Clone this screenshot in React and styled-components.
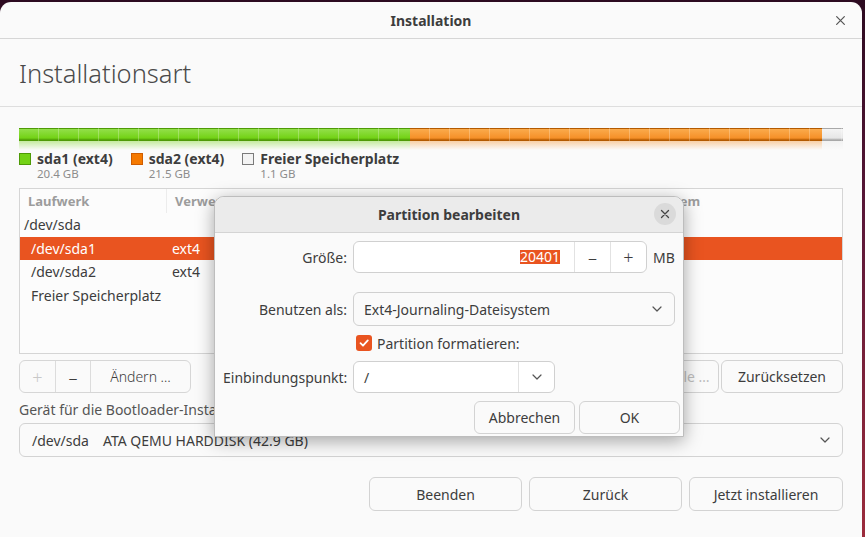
import React from "react";
import styled, { createGlobalStyle } from "styled-components";

const GlobalStyle = createGlobalStyle`
  html, body {
    margin: 0;
    padding: 0;
    width: 865px;
    height: 537px;
    overflow: hidden;
    background: linear-gradient(180deg, #2c0a20 0%, #5a1738 40%, #9c2c3c 100%);
    font-family: "Noto Sans", "Open Sans", "DejaVu Sans", sans-serif;
    color: #3d3d3d;
  }
`;

const Chevron = ({ size = 10 }) => (
  <svg width={size} height={size * 0.6} viewBox="0 0 10 6" fill="none">
    <path d="M1 1 L5 5 L9 1" stroke="#555" strokeWidth="1.2" strokeLinecap="round" strokeLinejoin="round" />
  </svg>
);

const Cross = ({ size = 10, color = "#444", width = 1.3 }) => (
  <svg width={size} height={size} viewBox="0 0 10 10">
    <path d="M1.5 1.5 L8.5 8.5 M8.5 1.5 L1.5 8.5" stroke={color} strokeWidth={width} strokeLinecap="round" />
  </svg>
);

const Desktop = styled.div`
  padding-top: 2px;
  height: 535px;
`;

const Window = styled.div`
  position: relative;
  width: 862px;
  height: 545px;
  background: #fafafa;
  border-radius: 11px 11px 0 0;
`;

const TitleBar = styled.div`
  height: 36px;
  display: flex;
  align-items: center;
  justify-content: center;
  border-bottom: 1px solid #d6d6d6;
  font-size: 14px;
  font-weight: 700;
  color: #3d3d3d;
  position: relative;
  .close {
    position: absolute;
    right: 11px;
    top: 7px;
    width: 22px;
    height: 22px;
    display: flex;
    align-items: center;
    justify-content: center;
  }
`;

const PageHeader = styled.div`
  height: 67px;
  display: flex;
  align-items: center;
  padding-left: 19px;
  border-bottom: 1px solid #dedede;
  font-size: 25.5px;
  font-weight: 300;
  color: #4a4a4a;
`;

const Content = styled.div`
  padding: 21px 19px 0 19px;
`;

const Bar = styled.div`
  display: flex;
  height: 22px;
`;

const segColors = {
  green: { top: "#93e04a", mid: "#73d216", edge: "#4e9a06" },
  orange: { top: "#fbab4c", mid: "#f59028", edge: "#b35a00" },
  free: { top: "#f4f4f4", mid: "#e6e6e6", edge: "#a8a8a8" },
};

const Segment = styled.div`
  flex: 0 0 ${(p) => p.$w}px;
  background:
    repeating-linear-gradient(90deg, transparent 0 19px, rgba(255, 255, 255, 0.25) 19px 20px) 0 0 / 100% 13px no-repeat,
    linear-gradient(180deg,
      ${(p) => segColors[p.$c].edge} 0 1px,
      ${(p) => segColors[p.$c].top} 1px,
      ${(p) => segColors[p.$c].mid} 10px,
      ${(p) => segColors[p.$c].edge} 12px 13px) 0 0 / 100% 13px no-repeat,
    linear-gradient(180deg,
      ${(p) => segColors[p.$c].mid}66 0,
      rgba(250, 250, 250, 0) 9px) 0 13px / 100% 9px no-repeat;
`;

const Legend = styled.div`
  display: flex;
  gap: 18px;
  margin-top: 1px;
`;

const LegendItem = styled.div`
  display: grid;
  grid-template-columns: 12px auto;
  column-gap: 6px;
  align-items: center;
  .name {
    font-size: 14px;
    font-weight: 700;
    color: #3d3d3d;
    line-height: 16px;
  }
  .size {
    grid-column: 2;
    font-size: 11.5px;
    color: #8c8c8c;
    line-height: 14px;
  }
`;

const Swatch = styled.span`
  width: 10px;
  height: 10px;
  border: 1px solid ${(p) => p.$border};
  background: ${(p) => p.$bg};
`;

const Table = styled.div`
  margin-top: 7px;
  height: 164px;
  border: 1px solid #d5d5d5;
  background: #fcfcfc;
`;

const cols = "147px 105px 118px 105px 75px 75px 1fr";

const HeadRow = styled.div`
  display: grid;
  grid-template-columns: ${cols};
  height: 24px;
  align-items: stretch;
`;

const HeadCell = styled.div`
  display: flex;
  align-items: center;
  padding-left: 8px;
  border-right: 1px solid ${(p) => (p.$sep ? "#ececec" : "transparent")};
  font-size: 13px;
  font-weight: 700;
  color: #9c9c9c;
  white-space: nowrap;
  overflow: hidden;
`;

const Row = styled.div`
  display: grid;
  grid-template-columns: ${cols};
  height: 23.5px;
  align-items: center;
  font-size: 14px;
  background: ${(p) => (p.$selected ? "#e95420" : "transparent")};
  color: ${(p) => (p.$selected ? "#ffffff" : "#3d3d3d")};
  .dev {
    padding-left: ${(p) => (p.$child ? 11 : 4)}px;
    white-space: nowrap;
  }
  .use {
    padding-left: 5px;
  }
`;

const ButtonRow = styled.div`
  display: flex;
  justify-content: space-between;
  margin-top: 6px;
  height: 33px;
`;

const Group = styled.div`
  display: flex;
  border: 1px solid #d6d6d6;
  border-radius: 6px;
  background: #fafafa;
  overflow: hidden;
`;

const GroupButton = styled.div`
  width: ${(p) => p.$w}px;
  display: flex;
  align-items: center;
  justify-content: center;
  font-size: ${(p) => (p.$icon ? 18 : 14)}px;
  font-weight: 300;
  color: ${(p) => (p.$disabled ? "#c8c8c8" : "#3d3d3d")};
  & + & {
    border-left: 1px solid #dcdcdc;
  }
`;

const Button = styled.div`
  width: ${(p) => p.$w}px;
  height: ${(p) => p.$h || 33}px;
  box-sizing: border-box;
  display: flex;
  align-items: center;
  justify-content: center;
  border: 1px solid #d3d3d3;
  border-radius: 6px;
  background: #fafafa;
  font-size: 14px;
  color: ${(p) => (p.$disabled ? "#bdbdbd" : "#3d3d3d")};
  white-space: nowrap;
`;

const RightButtons = styled.div`
  display: flex;
  gap: 2px;
`;

const FieldLabel = styled.div`
  margin-top: 8px;
  font-size: 14px;
  color: #555;
  line-height: 18px;
`;

const Combo = styled.div`
  margin-top: 4px;
  height: 34px;
  box-sizing: border-box;
  border: 1px solid #d3d3d3;
  border-radius: 6px;
  background: #fafafa;
  display: flex;
  align-items: center;
  padding: 0 12px;
  font-size: 14px;
  color: #3d3d3d;
  .disk {
    margin-left: 14px;
    flex: 1;
  }
`;

const Footer = styled.div`
  display: flex;
  justify-content: flex-end;
  gap: 7px;
  margin-top: 20px;
`;

/* dialog */

const Dialog = styled.div`
  position: absolute;
  left: 214px;
  top: 194px;
  width: 470px;
  height: 241px;
  box-sizing: border-box;
  background: #fafafa;
  border: 1px solid #bdbdbd;
  border-radius: 10px 10px 0 0;
  box-shadow: 0 4px 18px rgba(0, 0, 0, 0.35);
  overflow: hidden;
`;

const DialogHeader = styled.div`
  height: 35px;
  background: #ebebeb;
  border-bottom: 1px solid #d4d4d4;
  display: flex;
  align-items: center;
  justify-content: center;
  position: relative;
  font-size: 14px;
  font-weight: 700;
  color: #3d3d3d;
`;

const CloseCircle = styled.div`
  position: absolute;
  right: 7px;
  top: 6px;
  width: 22px;
  height: 22px;
  border-radius: 50%;
  background: #dadada;
  display: flex;
  align-items: center;
  justify-content: center;
`;

const DialogBody = styled.div`
  padding: 8px 8px 0 8px;
`;

const FormRow = styled.div`
  display: grid;
  grid-template-columns: 124px auto;
  column-gap: 6px;
  align-items: center;
  height: ${(p) => p.$h}px;
  margin-top: ${(p) => p.$top || 0}px;
`;

const Label = styled.div`
  text-align: right;
  font-size: 14px;
  color: #3d3d3d;
  white-space: nowrap;
`;

const Field = styled.div`
  display: flex;
  align-items: center;
  gap: 6px;
`;

const Entry = styled.div`
  width: ${(p) => p.$w}px;
  height: ${(p) => p.$h || 32}px;
  box-sizing: border-box;
  border: 1px solid #d0d0d0;
  border-radius: 6px;
  background: ${(p) => p.$bg || "#ffffff"};
  display: flex;
  align-items: stretch;
  font-size: 14px;
  color: #3d3d3d;
  overflow: hidden;
`;

const EntryText = styled.div`
  flex: 1;
  display: flex;
  align-items: center;
  justify-content: ${(p) => (p.$right ? "flex-end" : "flex-start")};
  padding: 0 ${(p) => (p.$right ? 14 : 10)}px;
  .sel {
    background: #e95420;
    color: #fff;
    line-height: 14px;
  }
`;

const EntryButton = styled.div`
  width: 35px;
  border-left: 1px solid ${(p) => (p.$plain ? "transparent" : "#e2e2e2")};
  display: flex;
  align-items: center;
  justify-content: center;
  font-size: 18px;
  font-weight: 300;
  color: #3d3d3d;
`;

const Unit = styled.span`
  font-size: 14px;
  color: #3d3d3d;
`;

const Check = styled.div`
  display: flex;
  align-items: center;
  gap: 5px;
  padding-left: 3px;
  font-size: 14px;
  color: #3d3d3d;
  .box {
    width: 16px;
    height: 16px;
    border-radius: 3px;
    background: #e95420;
    display: flex;
    align-items: center;
    justify-content: center;
  }
`;

const DialogButtons = styled.div`
  display: flex;
  justify-content: flex-end;
  gap: 4px;
  margin-top: 8px;
  margin-right: -5px;
`;

const App = () => {
  return (
    <>
      <GlobalStyle />
      <Desktop>
        <Window>
          <TitleBar>
            Installation
            <span className="close">
              <Cross size={11} color="#555" width={1.1} />
            </span>
          </TitleBar>
          <PageHeader>Installationsart</PageHeader>
          <Content>
            <Bar>
              <Segment $c="green" $w={391} />
              <Segment $c="orange" $w={412} />
              <Segment $c="free" $w={21} />
            </Bar>
            <Legend>
              <LegendItem>
                <Swatch $bg="#73d216" $border="#4e9a06" />
                <span className="name">sda1 (ext4)</span>
                <span className="size">20.4 GB</span>
              </LegendItem>
              <LegendItem>
                <Swatch $bg="#f57900" $border="#ce5c00" />
                <span className="name">sda2 (ext4)</span>
                <span className="size">21.5 GB</span>
              </LegendItem>
              <LegendItem>
                <Swatch $bg="#f3f3f3" $border="#7a7a7a" />
                <span className="name">Freier Speicherplatz</span>
                <span className="size">1.1 GB</span>
              </LegendItem>
            </Legend>
            <Table>
              <HeadRow>
                <HeadCell $sep>Laufwerk</HeadCell>
                <HeadCell>Verwendung</HeadCell>
                <HeadCell>Einhängepunkt</HeadCell>
                <HeadCell>Formatieren?</HeadCell>
                <HeadCell>Größe</HeadCell>
                <HeadCell>Belegt</HeadCell>
                <HeadCell>System</HeadCell>
              </HeadRow>
              <Row>
                <span className="dev">/dev/sda</span>
              </Row>
              <Row $child $selected>
                <span className="dev">/dev/sda1</span>
                <span className="use">ext4</span>
              </Row>
              <Row $child>
                <span className="dev">/dev/sda2</span>
                <span className="use">ext4</span>
              </Row>
              <Row $child>
                <span className="dev">Freier Speicherplatz</span>
              </Row>
            </Table>
            <ButtonRow>
              <Group>
                <GroupButton $w={35} $icon $disabled>+</GroupButton>
                <GroupButton $w={34} $icon>–</GroupButton>
                <GroupButton $w={99}>Ändern …</GroupButton>
              </Group>
              <RightButtons>
                <Button $w={180} $disabled>Neue Partitionstabelle …</Button>
                <Button $w={122}>Zurücksetzen</Button>
              </RightButtons>
            </ButtonRow>
            <FieldLabel>Gerät für die Bootloader-Installation:</FieldLabel>
            <Combo>
              <span>/dev/sda</span>
              <span className="disk">ATA QEMU HARDDISK (42.9 GB)</span>
              <Chevron />
            </Combo>
            <Footer>
              <Button $w={153} $h={34}>Beenden</Button>
              <Button $w={153} $h={34}>Zurück</Button>
              <Button $w={154} $h={34}>Jetzt installieren</Button>
            </Footer>
          </Content>

          <Dialog>
            <DialogHeader>
              Partition bearbeiten
              <CloseCircle>
                <Cross />
              </CloseCircle>
            </DialogHeader>
            <DialogBody>
              <FormRow $h={32}>
                <Label>Größe:</Label>
                <Field>
                  <Entry $w={294}>
                    <EntryText $right>
                      <span className="sel">20401</span>
                    </EntryText>
                    <EntryButton>–</EntryButton>
                    <EntryButton>+</EntryButton>
                  </Entry>
                  <Unit>MB</Unit>
                </Field>
              </FormRow>
              <FormRow $h={34} $top={19}>
                <Label>Benutzen als:</Label>
                <Entry $w={322} $h={34} $bg="#fafafa">
                  <EntryText>Ext4-Journaling-Dateisystem</EntryText>
                  <EntryButton $plain>
                    <Chevron />
                  </EntryButton>
                </Entry>
              </FormRow>
              <FormRow $h={20} $top={7}>
                <span />
                <Check>
                  <span className="box">
                    <svg width="12" height="12" viewBox="0 0 12 12">
                      <path d="M2.5 6.2 L5 8.7 L9.8 3.4" stroke="#fff" strokeWidth="1.8" fill="none" strokeLinecap="round" strokeLinejoin="round" />
                    </svg>
                  </span>
                  Partition formatieren:
                </Check>
              </FormRow>
              <FormRow $h={32} $top={8}>
                <Label>Einbindungspunkt:</Label>
                <Entry $w={202}>
                  <EntryText>/</EntryText>
                  <EntryButton>
                    <Chevron />
                  </EntryButton>
                </Entry>
              </FormRow>
              <DialogButtons>
                <Button $w={101}>Abbrechen</Button>
                <Button $w={101}>OK</Button>
              </DialogButtons>
            </DialogBody>
          </Dialog>
        </Window>
      </Desktop>
    </>
  );
};

export default App;
